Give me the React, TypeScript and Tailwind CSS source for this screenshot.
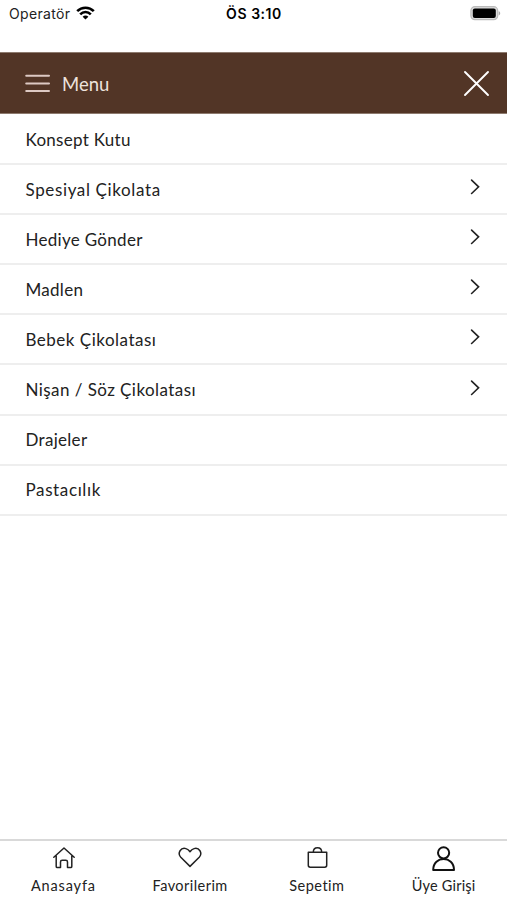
import type { ReactNode } from "react";

type MenuItem = {
  label: string;
  hasChildren?: boolean;
  tracking: string;
};

const menuItems: MenuItem[] = [
  { label: "Konsept Kutu", tracking: "tracking-[0.28px]" },
  { label: "Spesiyal Çikolata", hasChildren: true, tracking: "tracking-[0.63px]" },
  { label: "Hediye Gönder", hasChildren: true, tracking: "tracking-[0.3px]" },
  { label: "Madlen", hasChildren: true, tracking: "tracking-[0.28px]" },
  { label: "Bebek Çikolatası", hasChildren: true, tracking: "tracking-[0.5px]" },
  { label: "Nişan / Söz Çikolatası", hasChildren: true, tracking: "tracking-[0.44px]" },
  { label: "Drajeler", tracking: "tracking-[0.3px]" },
  { label: "Pastacılık", tracking: "tracking-[0.62px]" },
];

function StatusBar() {
  return (
    <div className="grid h-[52px] grid-cols-3 items-start pl-[9px] pr-[6px] pt-[4px] font-['Inter',sans-serif] text-[14px] leading-[20px] text-[#222]">
      <div className="flex items-center gap-[6px]">
        <span className="tracking-[0.35px]">Operatör</span>
        <svg className="mb-[2px]" width="19" height="14" viewBox="0 0 19 14" fill="none" stroke="#000" strokeWidth="2.6">
          <path d="M1.2 5.2C5.8.6 13.2.6 17.8 5.2" />
          <path d="M4.2 8.3c3-3 7.6-3 10.6 0" />
          <path d="M9.5 13.6 6.6 10.7c1.6-1.5 4.2-1.5 5.8 0z" fill="#000" stroke="none" />
        </svg>
      </div>
      <div className="pr-[2px] text-center font-semibold tracking-[0.55px] text-black">ÖS 3:10</div>
      <div className="flex justify-end pt-[2px]">
        <svg width="31" height="15" viewBox="0 0 31 15">
          <rect x="0.9" y="0.7" width="26.8" height="13" rx="4" fill="#ddd" stroke="#bbb" strokeWidth="1.2" />
          <rect x="2.8" y="2.4" width="23" height="9.6" rx="2" fill="#000" />
          <path d="M28.7 5.2c2 .6 2 3.6 0 4.2z" fill="#aaa" />
        </svg>
      </div>
    </div>
  );
}

type TabItemProps = {
  label: string;
  tracking: string;
  children: ReactNode;
};

function TabItem({ label, tracking, children }: TabItemProps) {
  return (
    <button className="flex flex-col items-center pt-[3px]">
      <svg width="28" height="28" viewBox="0 0 28 28" fill="none" stroke="#222" strokeWidth="1.5" strokeLinecap="round" strokeLinejoin="round">
        {children}
      </svg>
      <span className={`mt-[4px] whitespace-nowrap text-[14.5px] leading-[20px] ${tracking}`}>{label}</span>
    </button>
  );
}

export default function App() {
  return (
    <div className="flex h-[900px] w-[507px] flex-col overflow-hidden bg-white font-['Lato',sans-serif] text-[#222]">
      <StatusBar />

      {/* Header */}
      <header className="flex h-[62px] items-center justify-between border-y border-[#8d7a6e] bg-[#523526] pl-[25px] pr-[17px]">
        <div className="flex items-center gap-[12px]">
          <svg width="25" height="20" viewBox="0 0 25 20" stroke="#ddc9c3" strokeWidth="2" strokeLinecap="round">
            <path d="M1.2 2.7h22.8M1.2 10.4h22.8M1.2 18.1h22.8" />
          </svg>
          <span className="pt-[2px] text-[18.5px] leading-[24px] text-[#eee3dd]">Menu</span>
        </div>
        <svg width="27" height="27" viewBox="0 0 27 27" stroke="#fff" strokeWidth="1.9" strokeLinecap="round">
          <path d="M2 2l23 23M25 2 2 25" />
        </svg>
      </header>

      {/* Menu list */}
      <ul className="flex-1 pt-[1px]">
        {menuItems.map((item) => (
          <li key={item.label} className="flex h-[50.1px] items-center justify-between border-b-2 border-[#eee] pl-[25.5px] pr-[26px]">
            <span className={`whitespace-nowrap pt-[1px] text-[17px] leading-[24px] ${item.tracking}`}>{item.label}</span>
            {item.hasChildren && (
              <svg className="mb-[4px]" width="11" height="16" viewBox="0 0 11 16" fill="none" stroke="#222" strokeWidth="1.6" strokeLinecap="round">
                <path d="m1.6 1.1 7 6.7-7 6.7" />
              </svg>
            )}
          </li>
        ))}
      </ul>

      {/* Bottom tabs */}
      <nav className="grid h-[61px] grid-cols-4 border-t-2 border-[#d9d9d9]">
        <TabItem label="Anasayfa" tracking="tracking-[0.85px]">
          <path d="M4.8 13.2 15 4l10.2 9.2M7.2 11.8v10.6q0 1.1 1.1 1.1h3.2v-5.6q0-1.7 1.7-1.7h3.6q1.7 0 1.7 1.7v5.6h3.2q1.1 0 1.1-1.1V11.8" />
        </TabItem>
        <TabItem label="Favorilerim" tracking="tracking-[0.45px]">
          <path d="M14 22.4 4.8 13.3C.9 8.9 5 3.2 9.9 4.6c1.9.6 3.1 1.7 4.1 3.1 1-1.4 2.2-2.5 4.1-3.1 4.9-1.4 9 4.3 5.1 8.7z" />
        </TabItem>
        <TabItem label="Sepetim" tracking="tracking-[0.5px]">
          <path d="M5.3 8.3h18.4v13q0 1.9-1.9 1.9H7.2q-1.9 0-1.9-1.9zM10.3 8.2c0-5.9 8.4-5.9 8.4 0" />
        </TabItem>
        <TabItem label="Üye Girişi" tracking="tracking-[0.2px]">
          <circle cx="13.6" cy="8.8" r="5.6" stroke="#111" strokeWidth="2" />
          <path d="M3.2 26c0-14.6 20.8-14.6 20.8 0z" stroke="#111" strokeWidth="2" />
        </TabItem>
      </nav>
    </div>
  );
}
